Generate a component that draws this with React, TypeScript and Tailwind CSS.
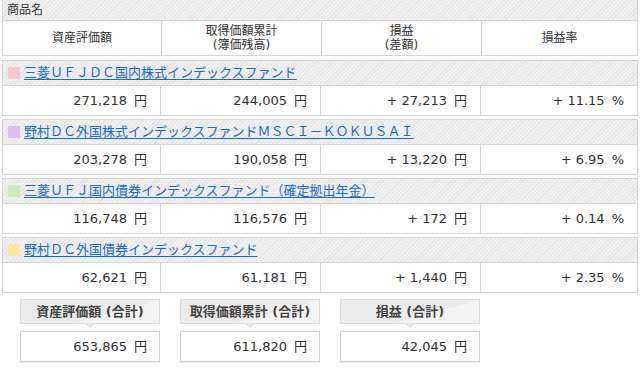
import React from "react";

const funds = [
  { name: "三菱ＵＦＪＤＣ国内株式インデックスファンド", color: "bg-[#f8c8d2]", v: ["271,218 円", "244,005 円", "+ 27,213 円", "+ 11.15 %"] },
  { name: "野村ＤＣ外国株式インデックスファンドＭＳＣＩ－ＫＯＫＵＳＡＩ", color: "bg-[#dcbff0]", v: ["203,278 円", "190,058 円", "+ 13,220 円", "+ 6.95 %"] },
  { name: "三菱ＵＦＪ国内債券インデックスファンド（確定拠出年金）", color: "bg-[#cdecb8]", v: ["116,748 円", "116,576 円", "+ 172 円", "+ 0.14 %"] },
  { name: "野村ＤＣ外国債券インデックスファンド", color: "bg-[#fbe6a2]", v: ["62,621 円", "61,181 円", "+ 1,440 円", "+ 2.35 %"] },
];

const totals = [
  { label: "資産評価額 (合計)", value: "653,865 円" },
  { label: "取得価額累計 (合計)", value: "611,820 円" },
  { label: "損益 (合計)", value: "42,045 円" },
];

function Val({ s }: { s: string }) {
  const i = s.lastIndexOf(" ");
  return (
    <>
      <span>{s.slice(0, i)}</span>
      <span className="ml-[7px]">{s.slice(i + 1)}</span>
    </>
  );
}

export default function App() {
  return (
    <div className="w-[640px] h-[369px] overflow-hidden bg-white text-[#333] font-['DejaVu_Sans','Noto_Sans_CJK_JP',sans-serif]">
      <div className="ml-[2px] w-[636px]">
        <div className="h-[21px] border-x border-b border-[#d6d6d6] bg-[repeating-linear-gradient(135deg,#e4e4e4_0px,#e4e4e4_1px,#f0f0f0_1px,#f0f0f0_3px)] pl-[4px] text-[12px] leading-[20px]">
          商品名
        </div>
        <div className="grid h-[35px] grid-cols-[159px_160px_160px_1fr] border-x border-b border-[#d6d6d6] text-[12px] leading-[14px]">
          <div className="flex items-center justify-center border-r border-[#d6d6d6]">資産評価額</div>
          <div className="flex flex-col items-center justify-center border-r border-[#d6d6d6]">
            <span>取得価額累計</span>
            <span>(簿価残高)</span>
          </div>
          <div className="flex flex-col items-center justify-center border-r border-[#d6d6d6]">
            <span>損益</span>
            <span>(差額)</span>
          </div>
          <div className="flex items-center justify-center">損益率</div>
        </div>
        <div className="mt-[4px] flex flex-col gap-[3px]">
          {funds.map((f) => (
            <div key={f.name} className="border border-[#d6d6d6]">
              <div className="flex h-[25px] items-center border-b border-[#d6d6d6] bg-[repeating-linear-gradient(135deg,#e4e4e4_0px,#e4e4e4_1px,#f0f0f0_1px,#f0f0f0_3px)] pl-[5px]">
                <span className={`mr-[4px] inline-block h-[12px] w-[12px] ${f.color}`} />
                <a href="#" className="text-[13px] leading-[16px] text-[#1b6ad3] underline underline-offset-[2px]">
                  {f.name}
                </a>
              </div>
              <div className="grid h-[29px] grid-cols-[158px_160px_160px_1fr] text-[13px]">
                {f.v.map((x, i) => (
                  <div
                    key={i}
                    className={`flex items-center justify-end pr-[13px] ${i < 3 ? "border-r border-[#d6d6d6]" : ""}`}
                  >
                    <Val s={x} />
                  </div>
                ))}
              </div>
            </div>
          ))}
        </div>
      </div>
      <div className="mt-[6px] flex gap-[20px] pl-[20px]">
        {totals.map((t) => (
          <div key={t.label} className="flex w-[140px] flex-col">
            <div className="relative flex h-[25px] items-center justify-center border border-[#dddddd] bg-[linear-gradient(165deg,#ebebeb_0%,#ebebeb_62%,#f4f4f4_62%,#f4f4f4_100%)] text-[13px] font-bold text-[#444]">
              {t.label}
              <span className="absolute left-1/2 top-full -translate-x-1/2 border-x-[6px] border-t-[5px] border-x-transparent border-t-[#e3e3e3]" />
            </div>
            <div className="mt-[7px] flex h-[31px] items-center justify-end border border-[#d2d2d2] pr-[12px] text-[13px] shadow-[0_1px_1px_rgba(0,0,0,0.06)]">
              <Val s={t.value} />
            </div>
          </div>
        ))}
      </div>
    </div>
  );
}
